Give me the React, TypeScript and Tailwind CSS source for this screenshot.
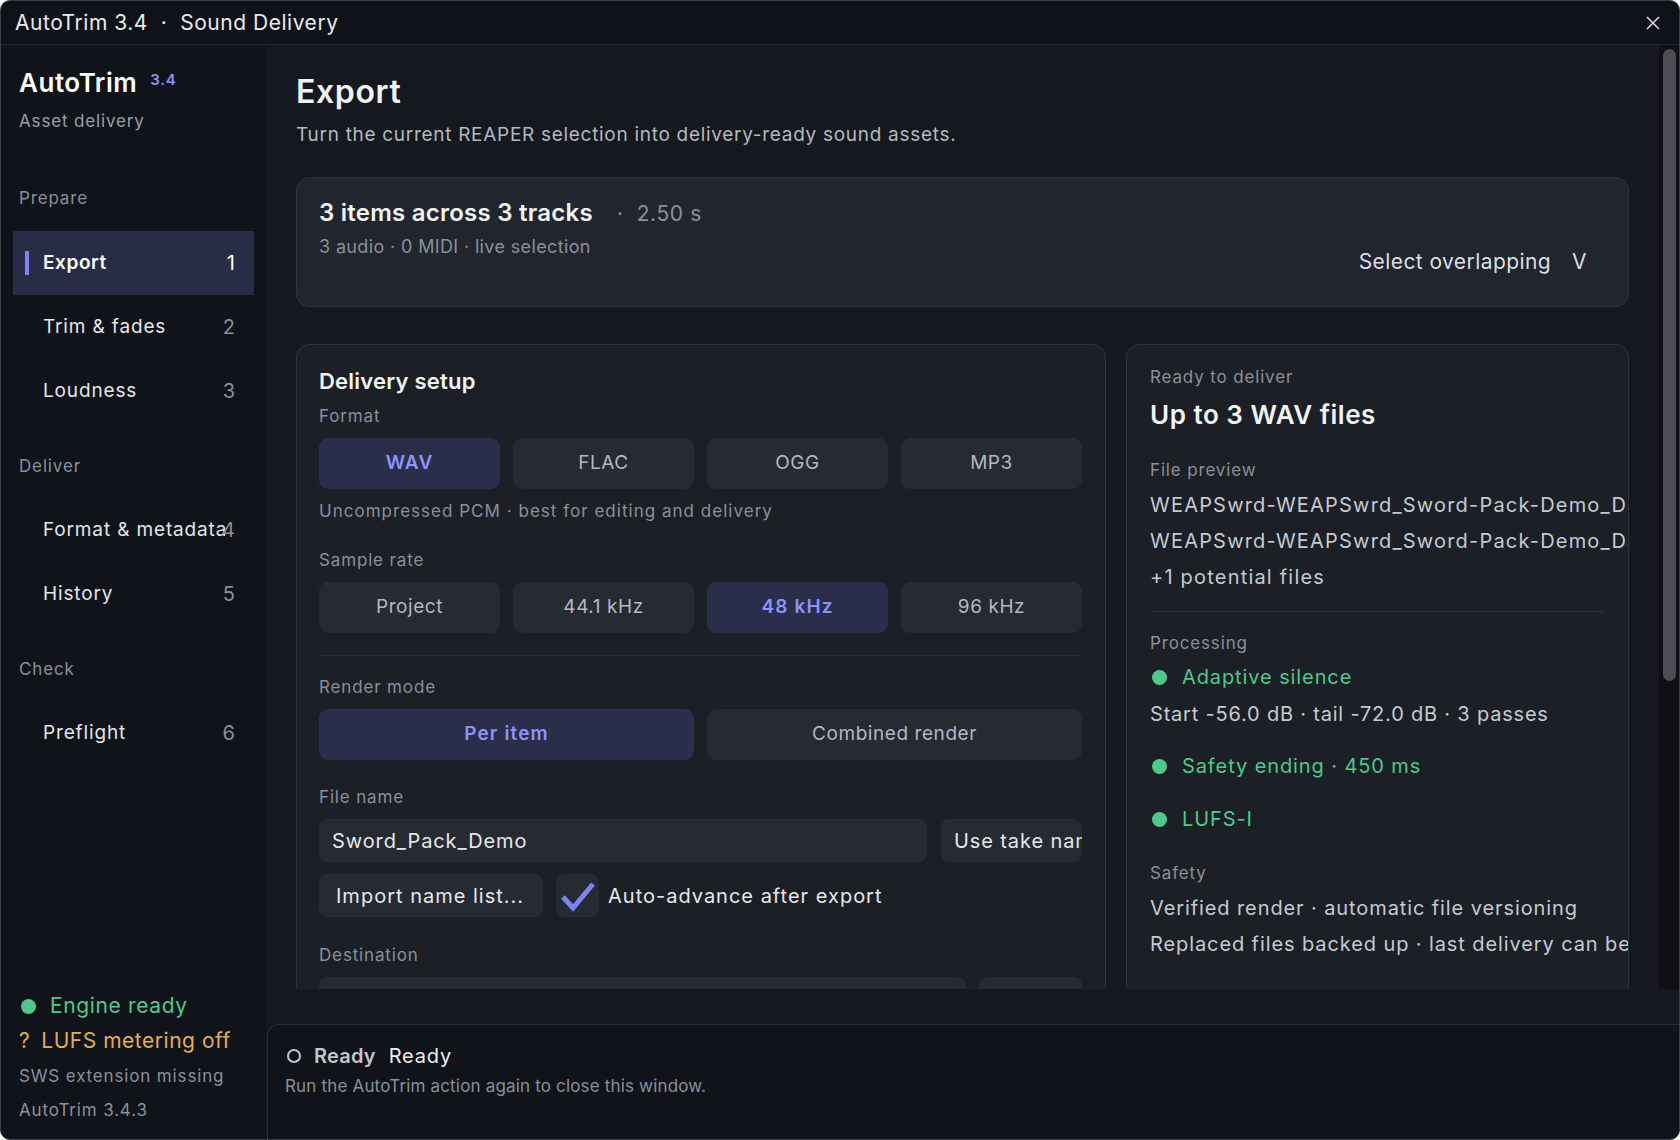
import React from 'react';

const navGroups = [
  {
    label: 'Prepare',
    items: [
      { name: 'Export', num: 1, active: true },
      { name: 'Trim & fades', num: 2 },
      { name: 'Loudness', num: 3 },
    ],
  },
  {
    label: 'Deliver',
    items: [
      { name: 'Format & metadata', num: 4 },
      { name: 'History', num: 5 },
    ],
  },
  {
    label: 'Check',
    items: [{ name: 'Preflight', num: 6 }],
  },
];

const Seg = ({ label, active }: { label: string; active?: boolean }) => (
  <div
    className={`h-[51px] rounded-[9px] flex items-center justify-center text-[19px] ${
      active ? 'bg-[#2a2e4a] text-[#8c94fa] font-semibold tracking-[0.06em]' : 'bg-[#252a33] text-[#b4b8c1] tracking-[0.03em]'
    }`}
  >
    {label}
  </div>
);

const Dot = () => <span className="inline-block w-[15px] h-[15px] rounded-full bg-[#4fc98b] mr-[10px] shrink-0" />;

const Label = ({ children, className = '' }: { children: React.ReactNode; className?: string }) => (
  <div className={`text-[17px] tracking-[0.05em] text-[#8a909b] leading-[22px] ${className}`}>{children}</div>
);

export default function App() {
  return (
    <div
      className="w-[1680px] h-[1140px] flex flex-col bg-[#15181e] rounded-[10px] border border-[#3a3e46] overflow-hidden text-[#e6e8ec]"
      style={{ fontFamily: 'Inter, "Noto Sans", sans-serif' }}
    >
      {/* title bar */}
      <div className="h-[44px] shrink-0 bg-[#0f1218] border-b border-[#22262e] flex items-center justify-between pl-[14px] pr-[18px]">
        <div className="text-[21px] tracking-[0.025em] text-[#e8eaee]">AutoTrim 3.4 &nbsp;·&nbsp; Sound Delivery</div>
        <svg width="16" height="16" viewBox="0 0 16 16" className="text-[#d4d6da]">
          <path d="M2 2 L14 14 M14 2 L2 14" stroke="currentColor" strokeWidth="1.6" />
        </svg>
      </div>

      <div className="flex flex-1 min-h-0">
        {/* sidebar */}
        <aside className="w-[265px] shrink-0 bg-[#10131a] flex flex-col">
          <div className="pl-[18px] pt-[21px]">
            <div className="flex items-start">
              <span className="text-[26px] font-semibold tracking-[0.02em] text-white leading-[34px]">AutoTrim</span>
              <span className="ml-[13px] mt-[4px] text-[15px] font-semibold text-[#8c94fa] leading-[20px] tracking-[0.05em]">3.4</span>
            </div>
            <div className="mt-[10px] text-[17px] tracking-[0.05em] text-[#9aa0ab] leading-[22px]">Asset delivery</div>
          </div>

          <nav className="mt-[54px]">
            {navGroups.map((g, gi) => (
              <div key={g.label} className={gi > 0 ? 'mt-[31px]' : ''}>
                <div className="pl-[18px] h-[24px] leading-[24px] text-[17px] tracking-[0.05em] text-[#8a909b]">{g.label}</div>
                <div className={gi === 0 ? 'mt-[21px]' : 'mt-[20px]'}>
                  {g.items.map((it) => (
                    <div
                      key={it.name}
                      className={`mx-[12px] h-[64px] flex items-center relative ${it.active ? 'bg-[#282c46]' : ''}`}
                    >
                      {it.active && <span className="absolute left-[12px] top-[20px] w-[4px] h-[24px] bg-[#7c84f2]" />}
                      <span
                        className={`pl-[30px] text-[19px] whitespace-nowrap ${
                          it.active ? 'font-semibold text-white tracking-[0.03em]' : 'text-[#e4e6ea] tracking-[0.045em]'
                        }`}
                      >
                        {it.name}
                      </span>
                      <span
                        className={`absolute right-[19px] text-[20px] ${it.active ? 'text-white' : 'text-[#8a909b]'}`}
                      >
                        {it.num}
                      </span>
                    </div>
                  ))}
                </div>
              </div>
            ))}
          </nav>

          <div className="mt-auto pl-[18px] pb-[12px]">
            <div className="flex items-center h-[34px] text-[21px] tracking-[0.03em] text-[#4fc98b]">
              <span className="inline-block w-[15px] h-[15px] rounded-full bg-[#4fc98b] ml-[2px] mr-[14px]" />
              Engine ready
            </div>
            <div className="flex items-center h-[36px] text-[21px] tracking-[0.025em] text-[#e3ae55]">
              <span className="mr-[11px]">?</span>LUFS metering off
            </div>
            <div className="h-[34px] leading-[34px] text-[17px] tracking-[0.05em] text-[#8a909b]">SWS extension missing</div>
            <div className="h-[34px] leading-[34px] text-[17px] tracking-[0.05em] text-[#8a909b]">AutoTrim 3.4.3</div>
          </div>
        </aside>

        {/* main column */}
        <div className="flex-1 min-w-0 flex flex-col">
          <div className="h-[944px] shrink-0 flex min-h-0">
            <div className="flex-1 min-w-0 overflow-hidden px-[30px] pt-[27px]">
              <h1 className="text-[32px] font-semibold tracking-[0.02em] text-[#f2f3f5] leading-[40px]">Export</h1>
              <p className="mt-[9px] text-[19px] tracking-[0.037em] text-[#b3b8c1] leading-[28px]">
                Turn the current REAPER selection into delivery-ready sound assets.
              </p>

              {/* selection summary */}
              <div className="mt-[28px] h-[130px] rounded-[13px] border border-[#2f333c] bg-[#21252e] flex justify-between pl-[22px] pr-[41px] pt-[19px]">
                <div>
                  <div className="flex items-baseline leading-[32px]">
                    <span className="text-[24px] font-semibold tracking-[0.01em] text-[#f2f3f5]">3 items across 3 tracks</span>
                    <span className="ml-[24px] text-[21px] text-[#8a909b] tracking-[0.03em]">·&nbsp; 2.50 s</span>
                  </div>
                  <div className="mt-[5px] text-[18px] tracking-[0.02em] text-[#8a909b] leading-[24px]">
                    3 audio · 0 MIDI · live selection
                  </div>
                </div>
                <div className="self-end mb-[32px] flex items-center text-[21px] tracking-[0.02em] text-[#dcdfe4] leading-[24px]">
                  <span>Select overlapping</span>
                  <span className="ml-[21px]">V</span>
                </div>
              </div>

              <div className="mt-[37px] grid grid-cols-[minmax(0,1fr)_503px] gap-[20px] items-start">
                {/* delivery setup */}
                <div className="min-w-0 rounded-[13px] border border-[#2f333c] bg-[#1c1f26] pl-[22px] pr-[23px] pt-[22px] h-[700px]">
                  <div className="text-[22px] font-semibold tracking-[0.01em] text-[#f2f3f5] leading-[28px]">Delivery setup</div>
                  <Label className="mt-[10px]">Format</Label>
                  <div className="mt-[11px] grid grid-cols-4 gap-[13px]">
                    <Seg label="WAV" active />
                    <Seg label="FLAC" />
                    <Seg label="OGG" />
                    <Seg label="MP3" />
                  </div>
                  <div className="mt-[11px] text-[17px] tracking-[0.06em] text-[#8a909b] leading-[22px]">
                    Uncompressed PCM · best for editing and delivery
                  </div>
                  <Label className="mt-[27px]">Sample rate</Label>
                  <div className="mt-[11px] grid grid-cols-4 gap-[13px]">
                    <Seg label="Project" />
                    <Seg label="44.1 kHz" />
                    <Seg label="48 kHz" active />
                    <Seg label="96 kHz" />
                  </div>
                  <div className="mt-[22px] h-px bg-[#2a2e37]" />
                  <Label className="mt-[20px]">Render mode</Label>
                  <div className="mt-[11px] grid grid-cols-2 gap-[13px]">
                    <Seg label="Per item" active />
                    <Seg label="Combined render" />
                  </div>
                  <Label className="mt-[26px]">File name</Label>
                  <div className="mt-[11px] flex gap-[14px]">
                    <div className="w-[608px] shrink-0 h-[43px] rounded-[8px] bg-[#252a33] flex items-center pl-[13px] text-[20px] tracking-[0.045em] text-[#e6e8ec]">
                      Sword_Pack_Demo
                    </div>
                    <div className="flex-1 min-w-0 h-[43px] rounded-[8px] bg-[#252a33] flex items-center pl-[13px] text-[20px] tracking-[0.045em] text-[#e6e8ec] overflow-hidden whitespace-nowrap">
                      Use take name
                    </div>
                  </div>
                  <div className="mt-[12px] flex items-center">
                    <div className="w-[224px] h-[43px] rounded-[8px] bg-[#252a33] flex items-center pl-[17px] text-[20px] tracking-[0.05em] text-[#e6e8ec]">
                      Import name list...
                    </div>
                    <div className="ml-[13px] w-[43px] h-[43px] rounded-[8px] bg-[#252a33] flex items-center justify-center">
                      <svg width="36" height="32" viewBox="0 0 36 32">
                        <path d="M3 17 L13 28 L33 4" fill="none" stroke="#7c84f2" strokeWidth="5" strokeLinejoin="miter" />
                      </svg>
                    </div>
                    <span className="ml-[9px] text-[20px] tracking-[0.05em] text-[#e6e8ec]">Auto-advance after export</span>
                  </div>
                  <Label className="mt-[27px]">Destination</Label>
                  <div className="mt-[11px] flex gap-[13px]">
                    <div className="w-[647px] shrink-0 h-[43px] rounded-[8px] bg-[#252a33]" />
                    <div className="flex-1 h-[43px] rounded-[8px] bg-[#252a33]" />
                  </div>
                </div>

                {/* ready to deliver */}
                <div className="min-w-0 rounded-[13px] border border-[#2f333c] bg-[#1c1f26] pl-[23px] pt-[21px] h-[700px] overflow-hidden whitespace-nowrap">
                  <Label>Ready to deliver</Label>
                  <div className="mt-[12px] text-[26px] font-semibold tracking-[0.02em] text-[#f2f3f5] leading-[30px]">Up to 3 WAV files</div>
                  <Label className="mt-[29px]">File preview</Label>
                  <div className="mt-[6px] text-[20px] tracking-[0.06em] text-[#c6cad2] leading-[36px]">
                    <div>WEAPSwrd-WEAPSwrd_Sword-Pack-Demo_Dagger_01.wav</div>
                    <div>WEAPSwrd-WEAPSwrd_Sword-Pack-Demo_Dagger_02.wav</div>
                    <div>+1 potential files</div>
                  </div>
                  <div className="mt-[16px] mr-[24px] h-px bg-[#2a2e37]" />
                  <Label className="mt-[20px]">Processing</Label>
                  <div className="mt-[8px] h-[30px] flex items-center text-[20px] tracking-[0.045em] text-[#4fc98b]">
                    <span className="ml-[2px]" />
                    <Dot />
                    <span className="ml-[5px]">Adaptive silence</span>
                  </div>
                  <div className="mt-[5px] h-[34px] leading-[34px] text-[20px] tracking-[0.04em] text-[#c6cad2]">
                    Start -56.0 dB · tail -72.0 dB · 3 passes
                  </div>
                  <div className="mt-[20px] h-[30px] flex items-center text-[20px] tracking-[0.045em] text-[#4fc98b]">
                    <span className="ml-[2px]" />
                    <Dot />
                    <span className="ml-[5px]">Safety ending · 450 ms</span>
                  </div>
                  <div className="mt-[23px] h-[30px] flex items-center text-[20px] tracking-[0.045em] text-[#4fc98b]">
                    <span className="ml-[2px]" />
                    <Dot />
                    <span className="ml-[5px]">LUFS-I</span>
                  </div>
                  <Label className="mt-[28px]">Safety</Label>
                  <div className="mt-[6px] text-[20px] tracking-[0.045em] text-[#c6cad2] leading-[36px]">
                    <div>Verified render · automatic file versioning</div>
                    <div>Replaced files backed up · last delivery can be restored</div>
                  </div>
                </div>
              </div>
            </div>
            {/* scrollbar */}
            <div className="w-[20px] shrink-0 bg-[#0e1014] pt-[4px] flex justify-center">
              <div className="w-[13px] h-[632px] rounded-full bg-[#4b4e54]" />
            </div>
          </div>

          <div className="flex-1 pt-[35px] flex flex-col">
            <div className="flex-1 ml-px bg-[#10131a] border-t border-l border-[#2c3039] rounded-tl-[12px] pl-[17px] pt-[17px]">
              <div className="flex items-center h-[28px] text-[20px]">
                <span className="inline-block ml-[2px] w-[14px] h-[14px] rounded-full border-[2px] border-[#c2c6ce] mr-[13px]" />
                <span className="font-semibold text-[#c2c6ce] tracking-[0.01em]">Ready</span>
                <span className="ml-[13px] text-[#eceef1] tracking-[0.04em]">Ready</span>
              </div>
              <div className="mt-[4px] text-[17px] tracking-[0.01em] text-[#8a909b] leading-[24px]">
                Run the AutoTrim action again to close this window.
              </div>
            </div>
          </div>
        </div>
      </div>
    </div>
  );
}
